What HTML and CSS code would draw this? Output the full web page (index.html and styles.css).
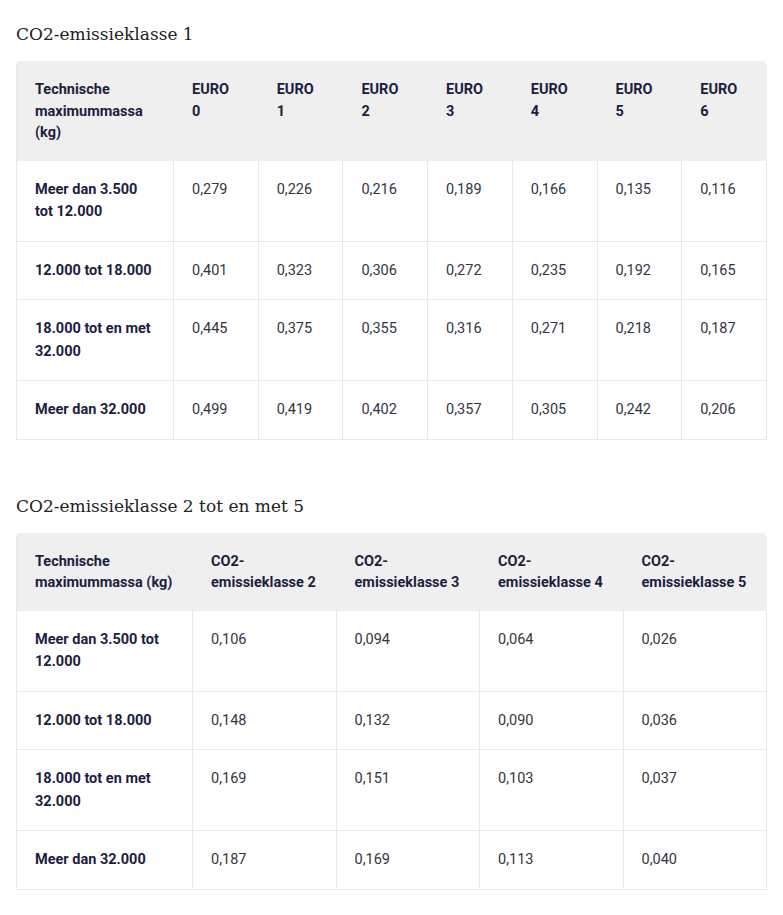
FILE: index.html
```html
<!DOCTYPE html>
<html lang="nl">
<head>
<meta charset="utf-8">
<title>CO2-emissieklassen</title>
<link rel="stylesheet" href="styles.css">
</head>
<body>
<main class="page">
  <section class="block">
    <h2 class="title">CO2-emissieklasse 1</h2>
    <table class="data t1">
      <thead>
        <tr>
          <th class="first">Technische maximummassa (kg)</th>
          <th>EURO 0</th><th>EURO 1</th><th>EURO 2</th><th>EURO 3</th><th>EURO 4</th><th>EURO 5</th><th>EURO 6</th>
        </tr>
      </thead>
      <tbody>
        <tr><th class="first">Meer dan 3.500 tot 12.000</th><td>0,279</td><td>0,226</td><td>0,216</td><td>0,189</td><td>0,166</td><td>0,135</td><td>0,116</td></tr>
        <tr><th class="first">12.000 tot 18.000</th><td>0,401</td><td>0,323</td><td>0,306</td><td>0,272</td><td>0,235</td><td>0,192</td><td>0,165</td></tr>
        <tr><th class="first">18.000 tot en met 32.000</th><td>0,445</td><td>0,375</td><td>0,355</td><td>0,316</td><td>0,271</td><td>0,218</td><td>0,187</td></tr>
        <tr><th class="first">Meer dan 32.000</th><td>0,499</td><td>0,419</td><td>0,402</td><td>0,357</td><td>0,305</td><td>0,242</td><td>0,206</td></tr>
      </tbody>
    </table>
  </section>

  <section class="block second">
    <h2 class="title">CO2-emissieklasse 2 tot en met 5</h2>
    <table class="data t2">
      <thead>
        <tr>
          <th class="first">Technische maximummassa (kg)</th>
          <th>CO2-emissieklasse 2</th><th>CO2-emissieklasse 3</th><th>CO2-emissieklasse 4</th><th>CO2-emissieklasse 5</th>
        </tr>
      </thead>
      <tbody>
        <tr><th class="first">Meer dan 3.500 tot 12.000</th><td>0,106</td><td>0,094</td><td>0,064</td><td>0,026</td></tr>
        <tr><th class="first">12.000 tot 18.000</th><td>0,148</td><td>0,132</td><td>0,090</td><td>0,036</td></tr>
        <tr><th class="first">18.000 tot en met 32.000</th><td>0,169</td><td>0,151</td><td>0,103</td><td>0,037</td></tr>
        <tr><th class="first">Meer dan 32.000</th><td>0,187</td><td>0,169</td><td>0,113</td><td>0,040</td></tr>
      </tbody>
    </table>
  </section>
</main>
</body>
</html>
```

FILE: styles.css
```css
html, body {
  margin: 0;
  padding: 0;
  background: #ffffff;
}

body {
  font-family: Roboto, "Liberation Sans", Arial, sans-serif;
  font-size: 14.5px;
  color: #333333;
}

.page {
  padding: 21px 16px 20px 16px;
}

.title {
  font-family: "DejaVu Serif", "Liberation Serif", serif;
  font-weight: normal;
  font-size: 17px;
  line-height: 27px;
  color: #222222;
  margin: 0 0 13px 0;
}

.second {
  margin-top: 53px;
}

.data {
  width: 100%;
  border-collapse: separate;
  border-spacing: 0;
  table-layout: fixed;
}

.data th,
.data td {
  box-sizing: border-box;
  text-align: left;
  vertical-align: top;
  padding: 18px 18px 17px 18px;
  line-height: 22.5px;
  border-right: 1px solid #e9e9e9;
  border-bottom: 1px solid #e9e9e9;
}

.data th {
  font-weight: 700;
  color: #1c1e40;
}

.data td {
  font-weight: 400;
  color: #333640;
}

.data .first {
  border-left: 1px solid #e9e9e9;
}

.data thead th {
  background: #efefef;
  border-color: transparent;
  border-bottom: 0;
  padding: 18px 18px 17px 18px;
  line-height: 21.5px;
}

.data thead th:first-child {
  border-top-left-radius: 5px;
}

.data thead th:last-child {
  border-top-right-radius: 5px;
}

.t1 .first {
  width: 158px;
}

.t2 .first {
  width: 177px;
}
```
